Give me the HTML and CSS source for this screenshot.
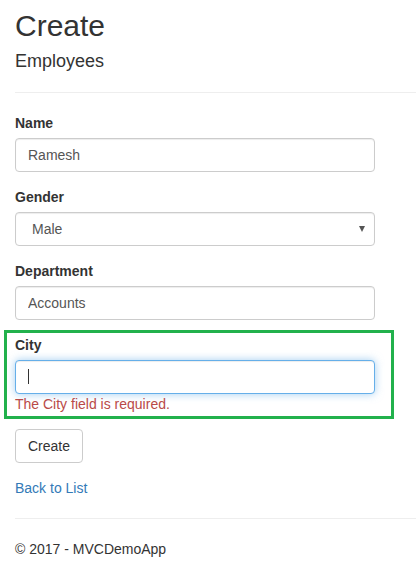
FILE: index.html
```html
<!DOCTYPE html>
<html>
<head>
<meta charset="utf-8">
<title>Create - MVCDemoApp</title>
<link rel="stylesheet" href="styles.css">
</head>
<body>
<div class="container">
  <h2 class="title">Create</h2>
  <h4 class="subtitle">Employees</h4>
  <hr class="rule">
  <form class="form">
    <div class="form-group">
      <label class="control-label">Name</label>
      <input class="form-control" type="text" value="Ramesh">
    </div>
    <div class="form-group">
      <label class="control-label">Gender</label>
      <div class="select-wrap">
        <select class="form-control select">
          <option>Male</option>
          <option>Female</option>
        </select>
      </div>
    </div>
    <div class="form-group">
      <label class="control-label">Department</label>
      <input class="form-control" type="text" value="Accounts">
    </div>
    <div class="annot">
      <div class="form-group">
        <label class="control-label">City</label>
        <div class="form-control focused"><span class="caret-line"></span></div>
        <span class="field-validation-error">The City field is required.</span>
      </div>
    </div>
    <div class="form-group">
      <button type="button" class="btn">Create</button>
    </div>
  </form>
  <div class="back"><a class="link" href="#">Back to List</a></div>
  <hr class="rule">
  <footer class="footer">
    <p class="copy">© 2017 - MVCDemoApp</p>
  </footer>
</div>
</body>
</html>
```
FILE: styles.css
```css
*, *::before, *::after { box-sizing: border-box; }
html, body { margin: 0; padding: 0; }
body {
  font-family: "Liberation Sans", Arial, Helvetica, sans-serif;
  font-size: 14px;
  line-height: 1.42857143;
  color: #333;
  background: #fff;
}
.container { padding-left: 15px; }
.title {
  margin: 9px 0 10px;
  font-size: 30px;
  font-weight: 500;
  line-height: 1.1;
}
.subtitle {
  margin: 10px 0;
  font-size: 18px;
  font-weight: 500;
  line-height: 1.1;
}
.rule {
  margin: 20px 0;
  border: 0;
  border-top: 1px solid #eee;
  height: 0;
}
.form { margin: 0; }
.form-group { margin-bottom: 15px; }
.control-label {
  display: block;
  margin-bottom: 5px;
  font-weight: bold;
}
.form-control {
  display: block;
  width: 360px;
  height: 34px;
  padding: 6px 12px;
  font-family: inherit;
  font-size: 14px;
  line-height: 1.42857143;
  color: #555;
  background: #fff;
  border: 1px solid #ccc;
  border-radius: 4px;
  box-shadow: inset 0 1px 1px rgba(0,0,0,.075);
  margin: 0;
  outline: none;
}
.select-wrap { position: relative; width: 360px; }
.select {
  -webkit-appearance: none;
  appearance: none;
  padding-left: 16px;
}
.select-wrap::after {
  content: "";
  position: absolute;
  right: 10px;
  top: 14px;
  width: 6px;
  height: 6px;
  border-left: 3px solid transparent;
  border-right: 3px solid transparent;
  border-top: 6px solid #555;
}
.annot { position: relative; }
.annot::before {
  content: "";
  position: absolute;
  left: -11px;
  top: -5px;
  width: 390px;
  height: 89px;
  border: 3px solid #22b14c;
  pointer-events: none;
}
.focused {
  display: flex;
  align-items: center;
  border-color: #66afe9;
  box-shadow: inset 0 1px 1px rgba(0,0,0,.075), 0 0 8px rgba(102,175,233,.6);
}
.caret-line {
  display: block;
  width: 1px;
  height: 15px;
  background: #333;
}
.field-validation-error {
  display: block;
  color: #b94a48;
}
.btn {
  display: inline-block;
  margin: 0;
  padding: 6px 12px;
  font-family: inherit;
  font-size: 14px;
  line-height: 1.42857143;
  color: #333;
  background: #fff;
  border: 1px solid #ccc;
  border-radius: 4px;
  cursor: pointer;
}
.link { color: #337ab7; text-decoration: none; }
.copy { margin: 0 0 10px; }
```
